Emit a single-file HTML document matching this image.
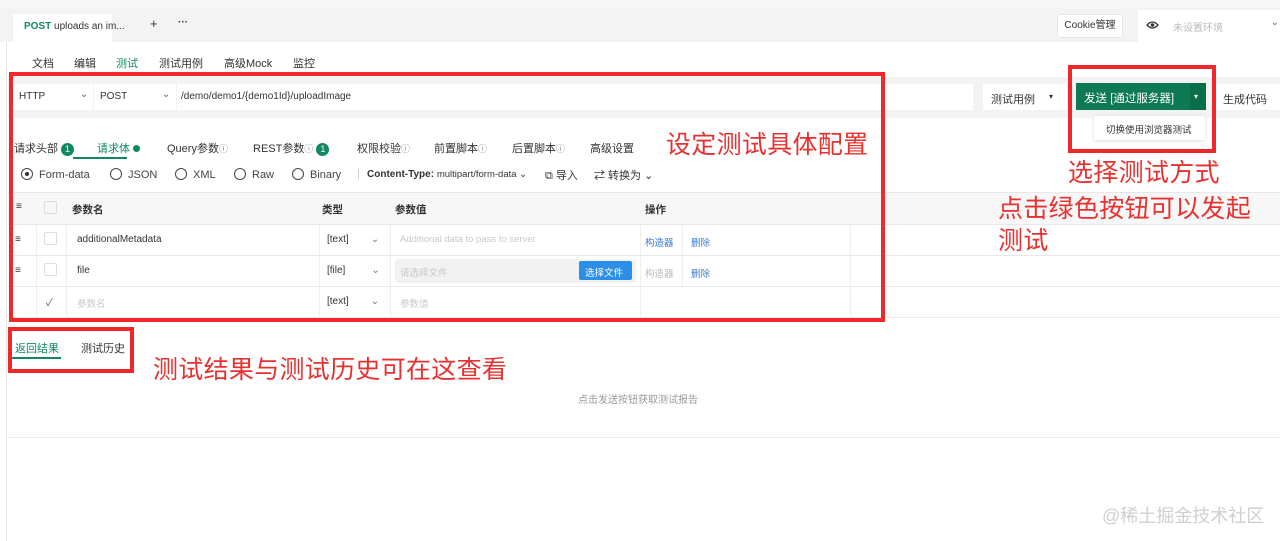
<!DOCTYPE html>
<html><head><meta charset="utf-8"><style>
*{margin:0;padding:0;box-sizing:border-box}
body{width:1280px;height:541px;overflow:hidden;background:#fff;font-family:"Liberation Sans","Noto Sans CJK SC",sans-serif;font-size:11px;color:#333;position:relative}
.a{position:absolute;white-space:nowrap}
.red{border:4px solid #f0282a}
.ann{color:#e8312f;font-size:25px;line-height:28px;letter-spacing:0.3px}
.g{color:#0f8a5f}
.hl{position:absolute;height:1px;background:#e8e8e8}
.vl{position:absolute;width:1px;background:#eee}
.badge{display:inline-block;width:13px;height:13px;border-radius:50%;background:#0f8a5f;color:#fff;font-size:9px;line-height:13px;text-align:center;vertical-align:middle;margin-left:3px}
.rad{display:inline-block;width:12px;height:12px;border:1.5px solid #444;border-radius:50%;vertical-align:-2px;margin-right:6px;position:relative}
.cb{position:absolute;width:13px;height:13px;border:1px solid #ddd;border-radius:2px;background:#fff}
.i{font-size:9px;color:#888}
</style></head><body>
<div class="a" style="left:0;top:0;width:1280px;height:42px;background:#f3f3f3"></div>
<div class="a" style="left:0;top:0;width:1280px;height:8px;background:#f7f7f7"></div>
<div class="a" style="left:13px;top:14px;width:99px;height:28px;background:#fff;padding:7px 0 0 11px;font-size:10px"><span class="g" style="font-weight:bold">POST</span> uploads an im...</div>
<div class="a" style="left:150px;top:16px;font-size:13px">+</div>
<div class="a" style="left:178px;top:17px;font-size:10px;font-weight:bold">···</div>
<div class="a" style="left:1057px;top:14px;width:66px;height:24px;background:#fff;border:1px solid #e6e6e6;border-radius:3px;font-size:10px;line-height:22px;text-align:center">Cookie管理</div>
<div class="a" style="left:1138px;top:10px;width:142px;height:32px;background:#fff"></div>
<svg class="a" style="left:1146px;top:20px" width="13" height="10" viewBox="0 0 13 10"><path d="M1 5Q6.5-1 12 5Q6.5 11 1 5Z" fill="none" stroke="#333" stroke-width="1.3"/><circle cx="6.5" cy="5" r="1.8" fill="#333"/></svg>
<div class="a" style="left:1173px;top:19px;color:#bbb;font-size:10px">未设置环境</div>
<div class="a" style="left:1271px;top:17px;color:#555;font-size:9px">⌄</div>
<div class="vl" style="left:6px;top:42px;height:499px;background:#e6e6e6"></div>
<div class="a" style="left:32px;top:55px">文档</div>
<div class="a" style="left:74px;top:55px">编辑</div>
<div class="a g" style="left:116px;top:55px">测试</div>
<div class="a" style="left:159px;top:55px">测试用例</div>
<div class="a" style="left:224px;top:55px">高级Mock</div>
<div class="a" style="left:293px;top:55px">监控</div>
<div class="a" style="left:8px;top:77px;width:1272px;height:41px;background:#f3f3f3"></div>
<div class="a" style="left:13px;top:84px;width:80px;height:26px;background:#fff;padding:7px 6px;font-size:10px">HTTP<span style="position:absolute;left:67px;top:5px;color:#666">⌄</span></div>
<div class="a" style="left:94px;top:84px;width:82px;height:26px;background:#fff;padding:7px 6px;font-size:10px">POST<span style="position:absolute;left:68px;top:5px;color:#666">⌄</span></div>
<div class="a" style="left:177px;top:84px;width:796px;height:26px;background:#fff;padding:7px 4px;font-size:10px">/demo/demo1/{demo1Id}/uploadImage</div>
<div class="a" style="left:983px;top:84px;width:84px;height:26px;background:#fff;padding:7px 8px">测试用例<span style="position:absolute;left:66px;top:8px;font-size:8px">▾</span></div>
<div class="a" style="left:1076px;top:83px;width:130px;height:27px;background:#0d7a53;color:#fff;font-size:11.5px;padding:7px 8px">发送 [通过服务器]<span style="position:absolute;left:114px;top:0;width:16px;height:27px;background:#0a6e4a;font-size:8px;padding:9px 4px">▾</span></div>
<div class="a" style="left:1212px;top:84px;width:68px;height:26px;background:#fff;padding:7px 11px">生成代码</div>
<div class="a" style="left:1094px;top:116px;width:111px;height:24px;background:#fff;box-shadow:0 1px 4px rgba(0,0,0,.15);font-size:9.5px;padding:6px 12px">切换使用浏览器测试</div>
<div class="a" style="left:14px;top:140px">请求头部<span class="badge">1</span></div>
<div class="a g" style="left:97px;top:140px">请求体 <span style="display:inline-block;width:7px;height:7px;border-radius:50%;background:#0f8a5f"></span></div>
<div class="a" style="left:73px;top:157px;width:54px;height:2px;background:#0f8a5f"></div>
<div class="a" style="left:167px;top:140px">Query参数<span class="i">ⓘ</span></div>
<div class="a" style="left:253px;top:140px">REST参数<span class="i">ⓘ</span><span class="badge">1</span></div>
<div class="a" style="left:357px;top:140px">权限校验<span class="i">ⓘ</span></div>
<div class="a" style="left:434px;top:140px">前置脚本<span class="i">ⓘ</span></div>
<div class="a" style="left:512px;top:140px">后置脚本<span class="i">ⓘ</span></div>
<div class="a" style="left:590px;top:140px">高级设置</div>
<div class="a" style="left:21px;top:168px;color:#444"><span class="rad"><span style="position:absolute;left:2.5px;top:2.5px;width:4px;height:4px;border-radius:50%;background:#333"></span></span>Form-data</div>
<div class="a" style="left:110px;top:168px;color:#444"><span class="rad"></span>JSON</div>
<div class="a" style="left:175px;top:168px;color:#444"><span class="rad"></span>XML</div>
<div class="a" style="left:234px;top:168px;color:#444"><span class="rad"></span>Raw</div>
<div class="a" style="left:292px;top:168px;color:#444"><span class="rad"></span>Binary</div>
<div class="a" style="left:357px;top:168px;color:#ccc">|</div>
<div class="a" style="left:367px;top:169px;font-size:10px"><b>Content-Type:</b> <span style="font-size:9.5px">multipart/form-data ⌄</span></div>
<div class="a" style="left:545px;top:167px">⧉ 导入</div>
<div class="a" style="left:594px;top:167px">⇄ 转换为 ⌄</div>
<div class="a" style="left:8px;top:192px;width:1272px;height:32px;background:#f7f7f7"></div>
<div class="hl" style="left:8px;top:192px;width:1272px"></div>
<div class="hl" style="left:8px;top:224px;width:1272px"></div>
<div class="hl" style="left:8px;top:255px;width:1272px"></div>
<div class="hl" style="left:8px;top:286px;width:1272px"></div>
<div class="hl" style="left:8px;top:317px;width:1272px"></div>
<div class="vl" style="left:36px;top:224px;height:93px"></div>
<div class="vl" style="left:66px;top:224px;height:93px"></div>
<div class="vl" style="left:319px;top:224px;height:93px"></div>
<div class="vl" style="left:390px;top:224px;height:93px"></div>
<div class="vl" style="left:640px;top:224px;height:93px"></div>
<div class="vl" style="left:682px;top:224px;height:62px"></div>
<div class="vl" style="left:850px;top:224px;height:93px"></div>
<div class="a" style="left:16px;top:201px;font-size:10px">≡</div>
<div class="cb" style="left:44px;top:201px;background:#f7f7f7"></div>
<div class="a" style="left:72px;top:202px;font-weight:bold;font-size:10.5px">参数名</div>
<div class="a" style="left:322px;top:202px;font-weight:bold;font-size:10.5px">类型</div>
<div class="a" style="left:395px;top:202px;font-weight:bold;font-size:10.5px">参数值</div>
<div class="a" style="left:645px;top:202px;font-weight:bold;font-size:10.5px">操作</div>
<div class="a" style="left:15px;top:234px;font-size:10px">≡</div>
<div class="cb" style="left:44px;top:232px"></div>
<div class="a" style="left:77px;top:234px;font-size:10px">additionalMetadata</div>
<div class="a" style="left:327px;top:234px;font-size:10px">[text]<span style="margin-left:22px;color:#777">⌄</span></div>
<div class="a" style="left:400px;top:234px;font-size:9.5px;color:#c8c8c8">Additional data to pass to server</div>
<div class="a" style="left:645px;top:235px;font-size:9.5px;color:#3a7bd5">构造器</div>
<div class="a" style="left:691px;top:235px;font-size:9.5px;color:#3a7bd5">删除</div>
<div class="a" style="left:15px;top:265px;font-size:10px">≡</div>
<div class="cb" style="left:44px;top:263px"></div>
<div class="a" style="left:77px;top:265px;font-size:10px">file</div>
<div class="a" style="left:327px;top:265px;font-size:10px">[file]<span style="margin-left:26px;color:#777">⌄</span></div>
<div class="a" style="left:395px;top:259px;width:241px;height:24px;background:#f2f2f2;border-radius:3px;padding:6px 5px;font-size:9.5px;color:#c8c8c8">请选择文件</div>
<div class="a" style="left:579px;top:261px;width:53px;height:19px;background:#2b8fe8;color:#fff;border-radius:2px;font-size:9.5px;padding:4px 6px">选择文件</div>
<div class="a" style="left:645px;top:266px;font-size:9.5px;color:#bbb">构造器</div>
<div class="a" style="left:691px;top:266px;font-size:9.5px;color:#3a7bd5">删除</div>
<div class="a" style="left:46px;top:294px;font-size:10px;color:#555">✓</div>
<div class="a" style="left:77px;top:296px;font-size:9.5px;color:#c8c8c8">参数名</div>
<div class="a" style="left:327px;top:296px;font-size:10px">[text]<span style="margin-left:22px;color:#777">⌄</span></div>
<div class="a" style="left:400px;top:296px;font-size:9.5px;color:#c8c8c8">参数值</div>
<div class="a g" style="left:15px;top:340px">返回结果</div>
<div class="a" style="left:9px;top:357px;width:52px;height:2px;background:#0f8a5f"></div>
<div class="a" style="left:81px;top:340px">测试历史</div>
<div class="a" style="left:578px;top:391px;font-size:10px;color:#999">点击发送按钮获取测试报告</div>
<div class="hl" style="left:8px;top:437px;width:1272px;background:#eee"></div>
<div class="a red" style="left:9px;top:72px;width:876px;height:250px"></div>
<div class="a red" style="left:1068px;top:65px;width:148px;height:88px"></div>
<div class="a red" style="left:8px;top:327px;width:126px;height:46px"></div>
<div class="a ann" style="left:666px;top:131px">设定测试具体配置</div>
<div class="a ann" style="left:1068px;top:159px">选择测试方式</div>
<div class="a ann" style="left:998px;top:195px">点击绿色按钮可以发起</div>
<div class="a ann" style="left:998px;top:227px">测试</div>
<div class="a ann" style="left:153px;top:356px">测试结果与测试历史可在这查看</div>
<div class="a" style="left:1102px;top:502px;font-size:18px;color:#cfcfcf">@稀土掘金技术社区</div>
</body></html>
